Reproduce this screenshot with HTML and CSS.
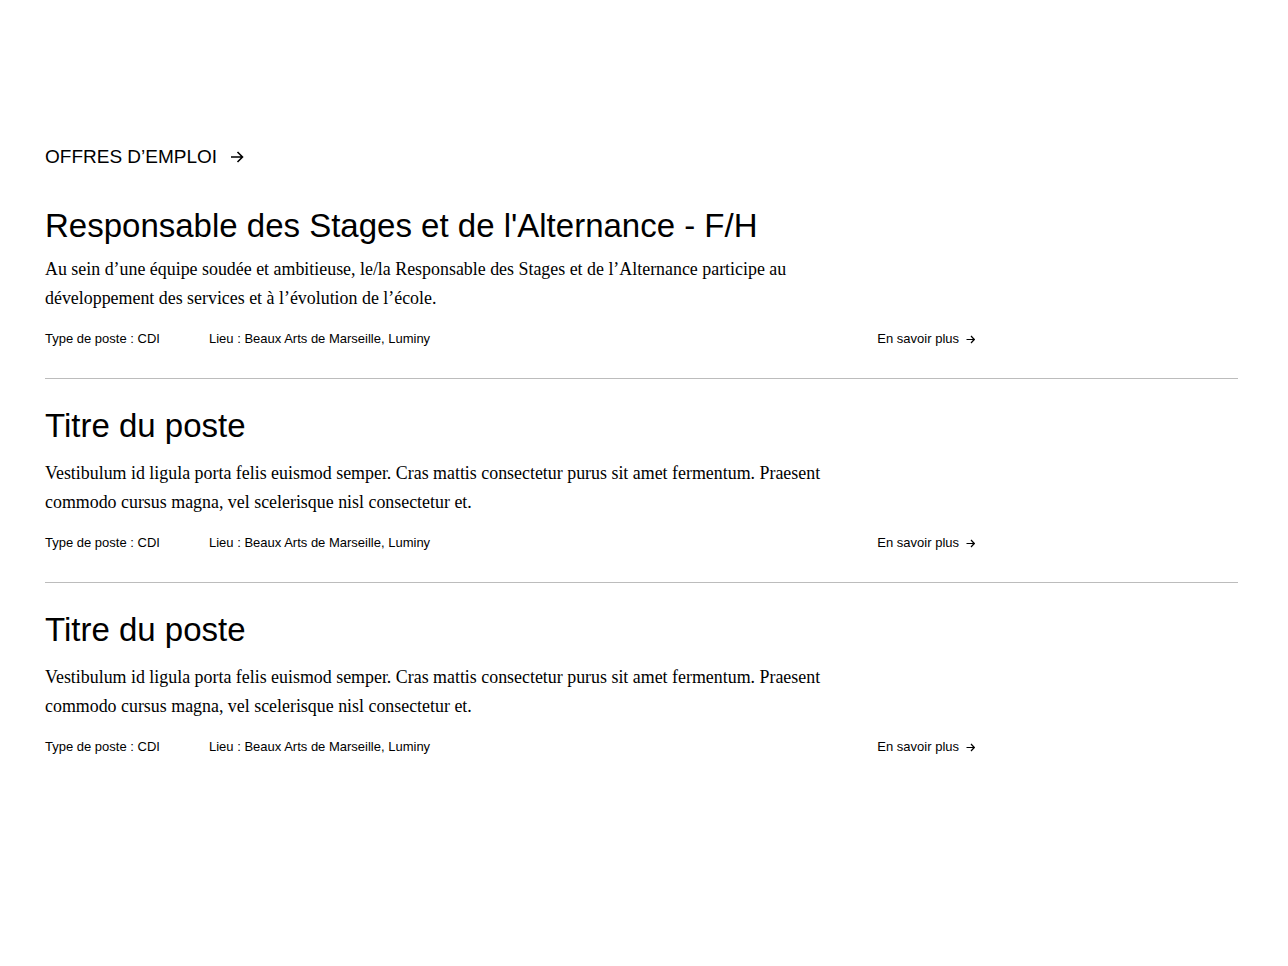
FILE: index.html
```html
<!DOCTYPE html>
<html lang="fr">
<head>
<meta charset="utf-8">
<title>Offres d'emploi</title>
<link rel="stylesheet" href="styles.css">
</head>
<body>
<main class="jobs">
  <h2 class="jobs-heading">OFFRES D’EMPLOI
    <svg class="arrow-lg" viewBox="0 0 14 12" width="14" height="12"><path d="M1 6H12.5M7.5 1L12.5 6L7.5 11" fill="none" stroke="#000" stroke-width="1.6"/></svg>
  </h2>
  <article class="job">
    <h3 class="job-title">Responsable des Stages et de l'Alternance - F/H</h3>
    <p class="job-desc">Au sein d’une équipe soudée et ambitieuse, le/la Responsable des Stages et de l’Alternance participe au développement des services et à l’évolution de l’école.</p>
    <div class="job-meta">
      <span class="meta-type">Type de poste : CDI</span>
      <span class="meta-place">Lieu : Beaux Arts de Marseille, Luminy</span>
      <a class="more" href="#">En savoir plus <svg class="arrow-sm" viewBox="0 0 9 9" width="9" height="9"><path d="M0.5 4.5H8.3M5 1L8.3 4.5L5 8" fill="none" stroke="#000" stroke-width="1.2"/></svg></a>
    </div>
  </article>
  <article class="job">
    <h3 class="job-title">Titre du poste</h3>
    <p class="job-desc">Vestibulum id ligula porta felis euismod semper. Cras mattis consectetur purus sit amet fermentum. Praesent commodo cursus magna, vel scelerisque nisl consectetur et.</p>
    <div class="job-meta">
      <span class="meta-type">Type de poste : CDI</span>
      <span class="meta-place">Lieu : Beaux Arts de Marseille, Luminy</span>
      <a class="more" href="#">En savoir plus <svg class="arrow-sm" viewBox="0 0 9 9" width="9" height="9"><path d="M0.5 4.5H8.3M5 1L8.3 4.5L5 8" fill="none" stroke="#000" stroke-width="1.2"/></svg></a>
    </div>
  </article>
  <article class="job">
    <h3 class="job-title">Titre du poste</h3>
    <p class="job-desc">Vestibulum id ligula porta felis euismod semper. Cras mattis consectetur purus sit amet fermentum. Praesent commodo cursus magna, vel scelerisque nisl consectetur et.</p>
    <div class="job-meta">
      <span class="meta-type">Type de poste : CDI</span>
      <span class="meta-place">Lieu : Beaux Arts de Marseille, Luminy</span>
      <a class="more" href="#">En savoir plus <svg class="arrow-sm" viewBox="0 0 9 9" width="9" height="9"><path d="M0.5 4.5H8.3M5 1L8.3 4.5L5 8" fill="none" stroke="#000" stroke-width="1.2"/></svg></a>
    </div>
  </article>
</main>
</body>
</html>
```
FILE: styles.css
```css
* { box-sizing: border-box; }
html, body { margin: 0; padding: 0; background: #fff; }
body {
  font-family: "Liberation Sans", Arial, sans-serif;
  color: #000;
}
.jobs {
  padding: 145px 50px 0 45px;
}
.jobs-heading {
  margin: 0 0 37px;
  font-size: 19px;
  line-height: 24px;
  font-weight: 400;
  display: flex;
  align-items: center;
  gap: 13px;
}
.arrow-lg { display: block; }
.job {
  border-bottom: 1px solid #bcbcbc;
  padding-bottom: 31px;
}
.job + .job { padding-top: 27px; }
.job:last-child { border-bottom: none; }
.job-title {
  margin: 0;
  font-size: 33px;
  line-height: 40px;
  font-weight: 400;
}
.job-desc {
  margin: 13px 0 0;
  max-width: 800px;
  font-family: "Liberation Serif", "Times New Roman", serif;
  font-size: 17.9px;
  line-height: 29px;
}
.job:first-of-type .job-desc { margin-top: 9px; }
.job-meta {
  margin-top: 18px;
  width: 930px;
  display: flex;
  align-items: center;
  font-size: 13px;
  line-height: 16px;
}
.meta-type { width: 164px; }
.more {
  margin-left: auto;
  color: #000;
  text-decoration: none;
  display: flex;
  align-items: center;
  gap: 7px;
}
.arrow-sm { display: block; }
```
